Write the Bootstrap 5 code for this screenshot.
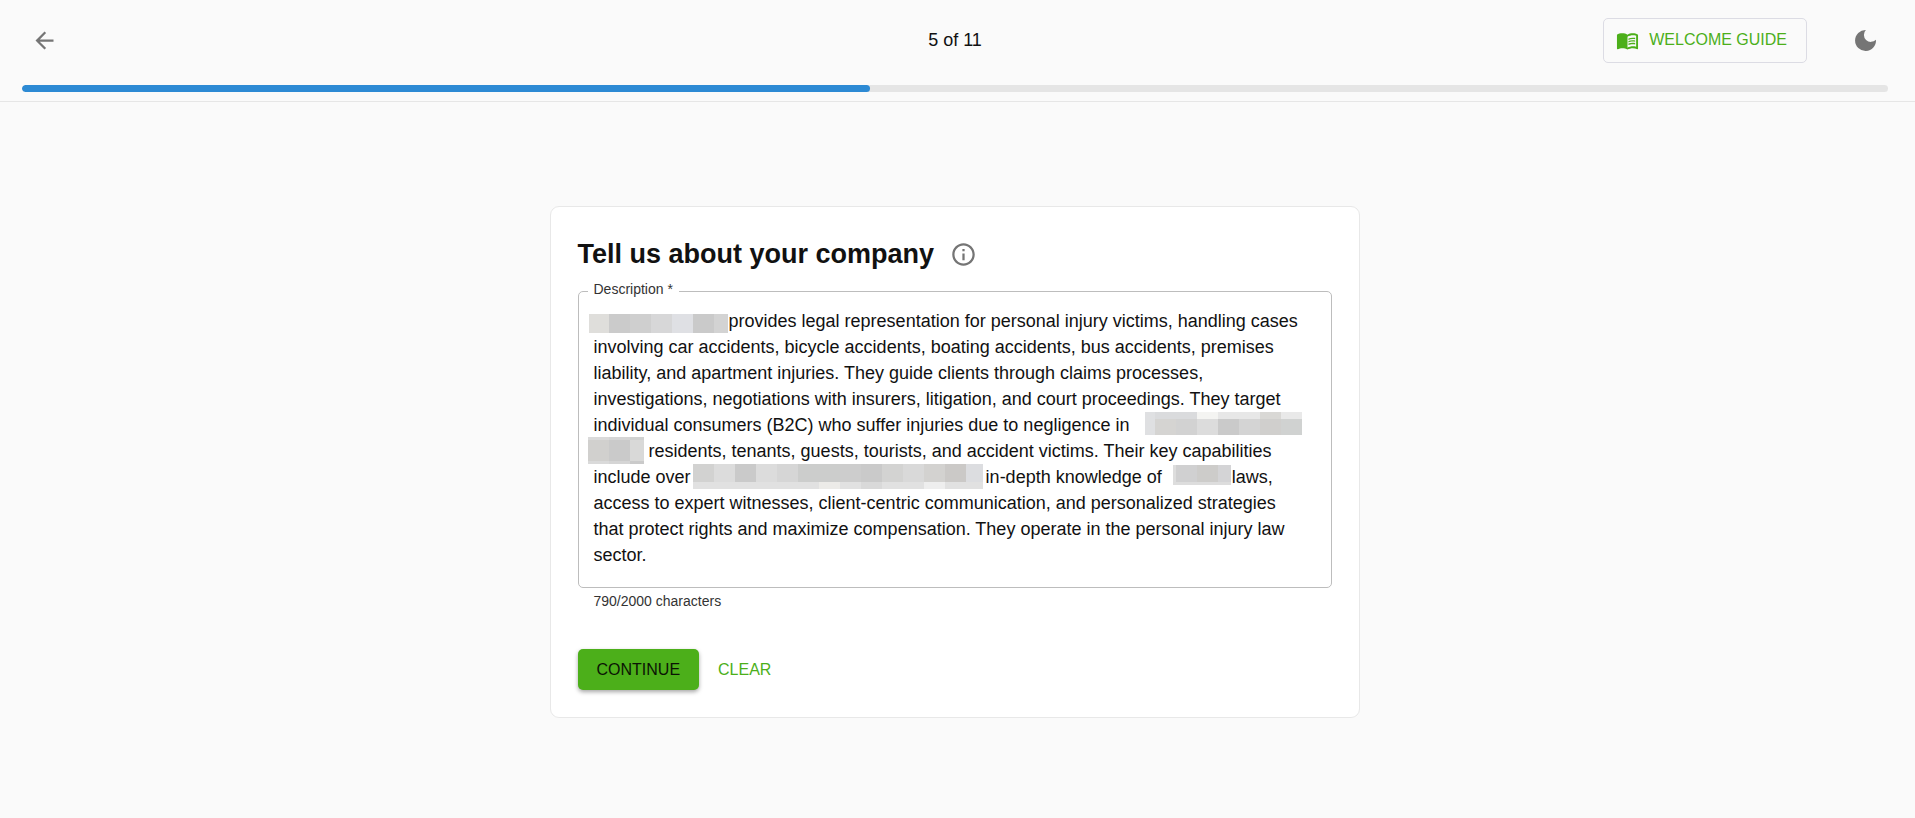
<!DOCTYPE html>
<html lang="en">
<head>
<meta charset="utf-8">
<meta name="viewport" content="width=device-width, initial-scale=1">
<title>Tell us about your company</title>
<link href="https://cdn.jsdelivr.net/npm/bootstrap@5.3.0/dist/css/bootstrap.min.css" rel="stylesheet">
<style>
  body { font-family: "Liberation Sans", Arial, sans-serif; font-size: 18px; line-height: 26px; color: #111; background: #fafafa; }
  .topbar { border-bottom: 1px solid #e6e6e6; padding: 18px 27px 9px 22px; }
  .tool-row { height: 44px; }
  .side { flex: 1 1 0; }
  .tools { gap: 36px; }
  .icon-btn { padding: 9px; border: 0; line-height: 0; color: #757575; }
  .icon-btn svg, .guide svg { fill: currentColor; }
  .guide { --bs-btn-color: #4caf1a; --bs-btn-border-color: #dcdce4; --bs-btn-hover-color: #3c9010; --bs-btn-hover-border-color: #4caf1a;
    height: 45px; padding: 0 19px 0 12px; gap: 10px; font-size: 16px; border-radius: 5px; }
  .steps { --bs-progress-height: 7px; --bs-progress-bg: #e5e5e5; --bs-progress-bar-bg: #2d8ad4; --bs-progress-border-radius: 4px; margin-top: 23px; }
  .steps .progress-bar { border-radius: 4px; }
  .page { padding-right: 6px; }
  .panel { max-width: 810px; margin-top: 104px; padding: 29px 27px 27px; border: 1px solid #e8e8e8; border-radius: 9px; background: #fff; }
  h1 { font-size: 27px; line-height: 36px; font-weight: 700; }
  .field { margin-top: 19px; }
  .field label { top: -12px; left: 10px; padding: 0 6px; font-size: 14px; line-height: 20px; color: #333; background: #fff; }
  .field textarea { display: block; height: 297px; padding: 16px 15px; font-size: 18px; line-height: 26px; color: #111; background: #fff;
    border: 1px solid #bdbdbd; border-radius: 5px; resize: none; white-space: pre; overflow: hidden; }
  .mosaic { shape-rendering: crispEdges; pointer-events: none; }
  .hint { padding-left: 16px; font-size: 14px; line-height: 20px; margin-top: 3px; color: #333; }
  .actions { margin-top: 38px; }
  .actions .btn { height: 41px; padding: 0 19px; font-size: 16px; border: 0; border-radius: 5px; }
  .go { --bs-btn-color: #0b1404; --bs-btn-bg: #4caf1a; --bs-btn-hover-bg: #3c9010; box-shadow: 0 2px 4px rgba(0,0,0,.35); }
  .wipe { --bs-btn-color: #4caf1a; --bs-btn-hover-color: #3c9010; }
</style>
</head>
<body>
<header class="topbar">
  <div class="tool-row d-flex align-items-center">
    <div class="side">
      <button type="button" class="btn icon-btn" aria-label="Back"><svg width="27" height="27" viewBox="0 0 24 24"><path d="M20 11H7.83l5.59-5.59L12 4l-8 8 8 8 1.41-1.41L7.83 13H20v-2z"/></svg></button>
    </div>
    <div>5 of 11</div>
    <div class="side tools d-flex justify-content-end align-items-center">
      <button type="button" class="btn guide d-inline-flex align-items-center">
        <svg width="23" height="23" viewBox="0 0 24 24" aria-hidden="true"><path d="M21 5c-1.11-.35-2.33-.5-3.5-.5-1.95 0-4.05.4-5.5 1.5-1.45-1.1-3.55-1.5-5.5-1.5S2.45 4.9 1 6v14.65c0 .25.25.5.5.5.1 0 .15-.05.25-.05C3.1 20.45 5.05 20 6.5 20c1.95 0 4.05.4 5.5 1.5 1.35-.85 3.8-1.5 5.5-1.5 1.65 0 3.35.3 4.75 1.05.1.05.15.05.25.05.25 0 .5-.25.5-.5V6c-.6-.45-1.25-.75-2-1zm0 13.5c-1.1-.35-2.3-.5-3.5-.5-1.7 0-4.15.65-5.5 1.5V8c1.35-.85 3.8-1.5 5.5-1.5 1.2 0 2.4.15 3.5.5v11.5z"/><path d="M17.5 10.5c.88 0 1.73.09 2.5.26V9.24c-.79-.15-1.64-.24-2.5-.24-1.7 0-3.24.29-4.5.83v1.66c1.13-.64 2.7-.99 4.5-.99zM13 12.49v1.66c1.13-.64 2.7-.99 4.5-.99.88 0 1.73.09 2.5.26V11.9c-.79-.15-1.64-.24-2.5-.24-1.7 0-3.24.3-4.5.83zM17.5 14.33c-1.7 0-3.24.29-4.5.83v1.66c1.13-.64 2.7-.99 4.5-.99.88 0 1.73.09 2.5.26v-1.52c-.79-.16-1.64-.24-2.5-.24z"/></svg>
        WELCOME GUIDE</button>
      <button type="button" class="btn icon-btn" aria-label="Dark mode"><svg width="27" height="27" viewBox="0 0 24 24"><path d="M12.3 2.7A9.3 9.3 0 1 0 21.3 11.3a5.8 5.8 0 0 1-9-8.6z"/></svg></button>
    </div>
  </div>
  <div class="progress steps" role="progressbar" aria-label="Setup progress" aria-valuenow="5" aria-valuemin="0" aria-valuemax="11">
    <div class="progress-bar" style="width:45.45%"></div>
  </div>
</header>

<main class="page">
  <form class="panel mx-auto" onsubmit="return false">
    <div class="d-flex align-items-center gap-3">
      <h1 class="mb-0">Tell us about your company</h1>
      <svg width="27" height="27" viewBox="0 0 24 24" fill="#757575" role="img" aria-label="Info"><path d="M11 7h2v2h-2zm0 4h2v6h-2zm1-9C6.48 2 2 6.48 2 12s4.48 10 10 10 10-4.48 10-10S17.52 2 12 2zm0 18c-4.41 0-8-3.59-8-8s3.59-8 8-8 8 3.59 8 8-3.59 8-8 8z"/></svg>
    </div>
    <div class="field position-relative">
      <label for="description" class="position-absolute">Description *</label>
      <textarea id="description" class="form-control" required spellcheck="false">
&nbsp;&nbsp;&nbsp;&nbsp;&nbsp;&nbsp;&nbsp;&nbsp;&nbsp;&nbsp;&nbsp;&nbsp;&nbsp;&nbsp;&nbsp;&nbsp;&nbsp;&nbsp;&nbsp;&nbsp;&nbsp;&nbsp;&nbsp;&nbsp;&nbsp;&nbsp;&nbsp;provides legal representation for personal injury victims, handling cases
involving car accidents, bicycle accidents, boating accidents, bus accidents, premises
liability, and apartment injuries. They guide clients through claims processes,
investigations, negotiations with insurers, litigation, and court proceedings. They target
individual consumers (B2C) who suffer injuries due to negligence in
&nbsp;&nbsp;&nbsp;&nbsp;&nbsp;&nbsp;&nbsp;&nbsp;&nbsp;&nbsp;&nbsp;residents, tenants, guests, tourists, and accident victims. Their key capabilities
include over&nbsp;&nbsp;&nbsp;&nbsp;&nbsp;&nbsp;&nbsp;&nbsp;&nbsp;&nbsp;&nbsp;&nbsp;&nbsp;&nbsp;&nbsp;&nbsp;&nbsp;&nbsp;&nbsp;&nbsp;&nbsp;&nbsp;&nbsp;&nbsp;&nbsp;&nbsp;&nbsp;&nbsp;&nbsp;&nbsp;&nbsp;&nbsp;&nbsp;&nbsp;&nbsp;&nbsp;&nbsp;&nbsp;&nbsp;&nbsp;&nbsp;&nbsp;&nbsp;&nbsp;&nbsp;&nbsp;&nbsp;&nbsp;&nbsp;&nbsp;&nbsp;&nbsp;&nbsp;&nbsp;&nbsp;&nbsp;&nbsp;&nbsp;&nbsp;in-depth knowledge of&nbsp;&nbsp;&nbsp;&nbsp;&nbsp;&nbsp;&nbsp;&nbsp;&nbsp;&nbsp;&nbsp;&nbsp;&nbsp;&nbsp;laws,
access to expert witnesses, client-centric communication, and personalized strategies
that protect rights and maximize compensation. They operate in the personal injury law
sector.</textarea>
      <!-- Masks over the private names in the description -->
      <svg class="mosaic position-absolute top-0 start-0" width="740" height="297" aria-hidden="true">
        <g>
          <path fill="#dfdedb" d="M11 23h20v19h-20z"/><path fill="#cbcbcb" d="M31 23h21v19h-21z"/><path fill="#cfcfcf" d="M52 23h21v19h-21z"/><path fill="#d7d7d8" d="M73 23h21v19h-21z"/><path fill="#dfe0e4" d="M94 23h21v19h-21z"/><path fill="#cacaca" d="M115 23h21v19h-21z"/><path fill="#d3d3d3" d="M136 23h14v19h-14z"/>
        </g>
        <g>
          <path fill="#dfe0e2" d="M567 121h10v23h-10z"/><path fill="#dadbdd" d="M577 121h42v7h-42z"/><path fill="#f4f4f2" d="M619 121h21v7h-21z"/><path fill="#e7e7e7" d="M640 121h42v7h-42z"/><path fill="#d9d8d5" d="M682 121h21v7h-21z"/><path fill="#e9e9e9" d="M703 121h21v7h-21z"/>
          <path fill="#d5d4d2" d="M577 128h21v16h-21z"/><path fill="#d2d2d2" d="M598 128h21v16h-21z"/><path fill="#dcdcdc" d="M619 128h21v16h-21z"/><path fill="#cacaca" d="M640 128h21v16h-21z"/><path fill="#d4d4d4" d="M661 128h21v16h-21z"/><path fill="#d0cfcd" d="M682 128h21v16h-21z"/><path fill="#d0d2d1" d="M703 128h21v16h-21z"/>
        </g>
        <g>
          <path fill="#dadada" d="M10 146h21v27h-21z"/><path fill="#d5d5d5" d="M31 146h21v27h-21z"/><path fill="#d1d0ce" d="M10 149h21v21h-21z"/><path fill="#cacaca" d="M31 149h21v21h-21z"/><path fill="#d0d1d0" d="M52 146h14v3h-14z"/><path fill="#d9d9d8" d="M52 149h14v21h-14z"/><path fill="#cacaca" d="M52 170h14v3h-14z"/>
        </g>
        <g>
          <path fill="#e1e1e1" d="M115 191h290v7h-290z"/><path fill="#ecebe8" d="M241 191h21v7h-21z"/><path fill="#eeeeee" d="M346 191h21v7h-21z"/><path fill="#d9d9d9" d="M283 191h21v7h-21z"/>
          <path fill="#d2d2d1" d="M115 173h21v18h-21z"/><path fill="#dcdcdc" d="M136 173h21v18h-21z"/><path fill="#cacaca" d="M157 173h21v18h-21z"/><path fill="#dcdcdc" d="M178 173h21v18h-21z"/><path fill="#d6d6d6" d="M199 173h21v18h-21z"/><path fill="#cccdcc" d="M220 173h42v18h-42z"/><path fill="#cdcdcd" d="M262 173h21v18h-21z"/><path fill="#cacaca" d="M283 173h21v18h-21z"/><path fill="#d3d3d2" d="M304 173h21v18h-21z"/><path fill="#d9d9d9" d="M325 173h21v18h-21z"/><path fill="#d3d2d0" d="M346 173h21v18h-21z"/><path fill="#cbc9c7" d="M367 173h21v18h-21z"/><path fill="#dcdde0" d="M388 173h17v18h-17z"/>
        </g>
        <g>
          <path fill="#dddddd" d="M595 174h58v20h-58z"/><path fill="#d0d0d1" d="M598 174h21v17h-21z"/><path fill="#cdccca" d="M619 174h21v17h-21z"/><path fill="#d4d4d6" d="M640 174h13v17h-13z"/>
        </g>
      </svg>
    </div>
    <div class="hint">790/2000 characters</div>
    <div class="actions d-flex">
      <button type="submit" class="btn go">CONTINUE</button>
      <button type="reset" class="btn wipe">CLEAR</button>
    </div>
  </form>
</main>
<script src="https://cdn.jsdelivr.net/npm/bootstrap@5.3.0/dist/js/bootstrap.bundle.min.js"></script>
</body>
</html>
